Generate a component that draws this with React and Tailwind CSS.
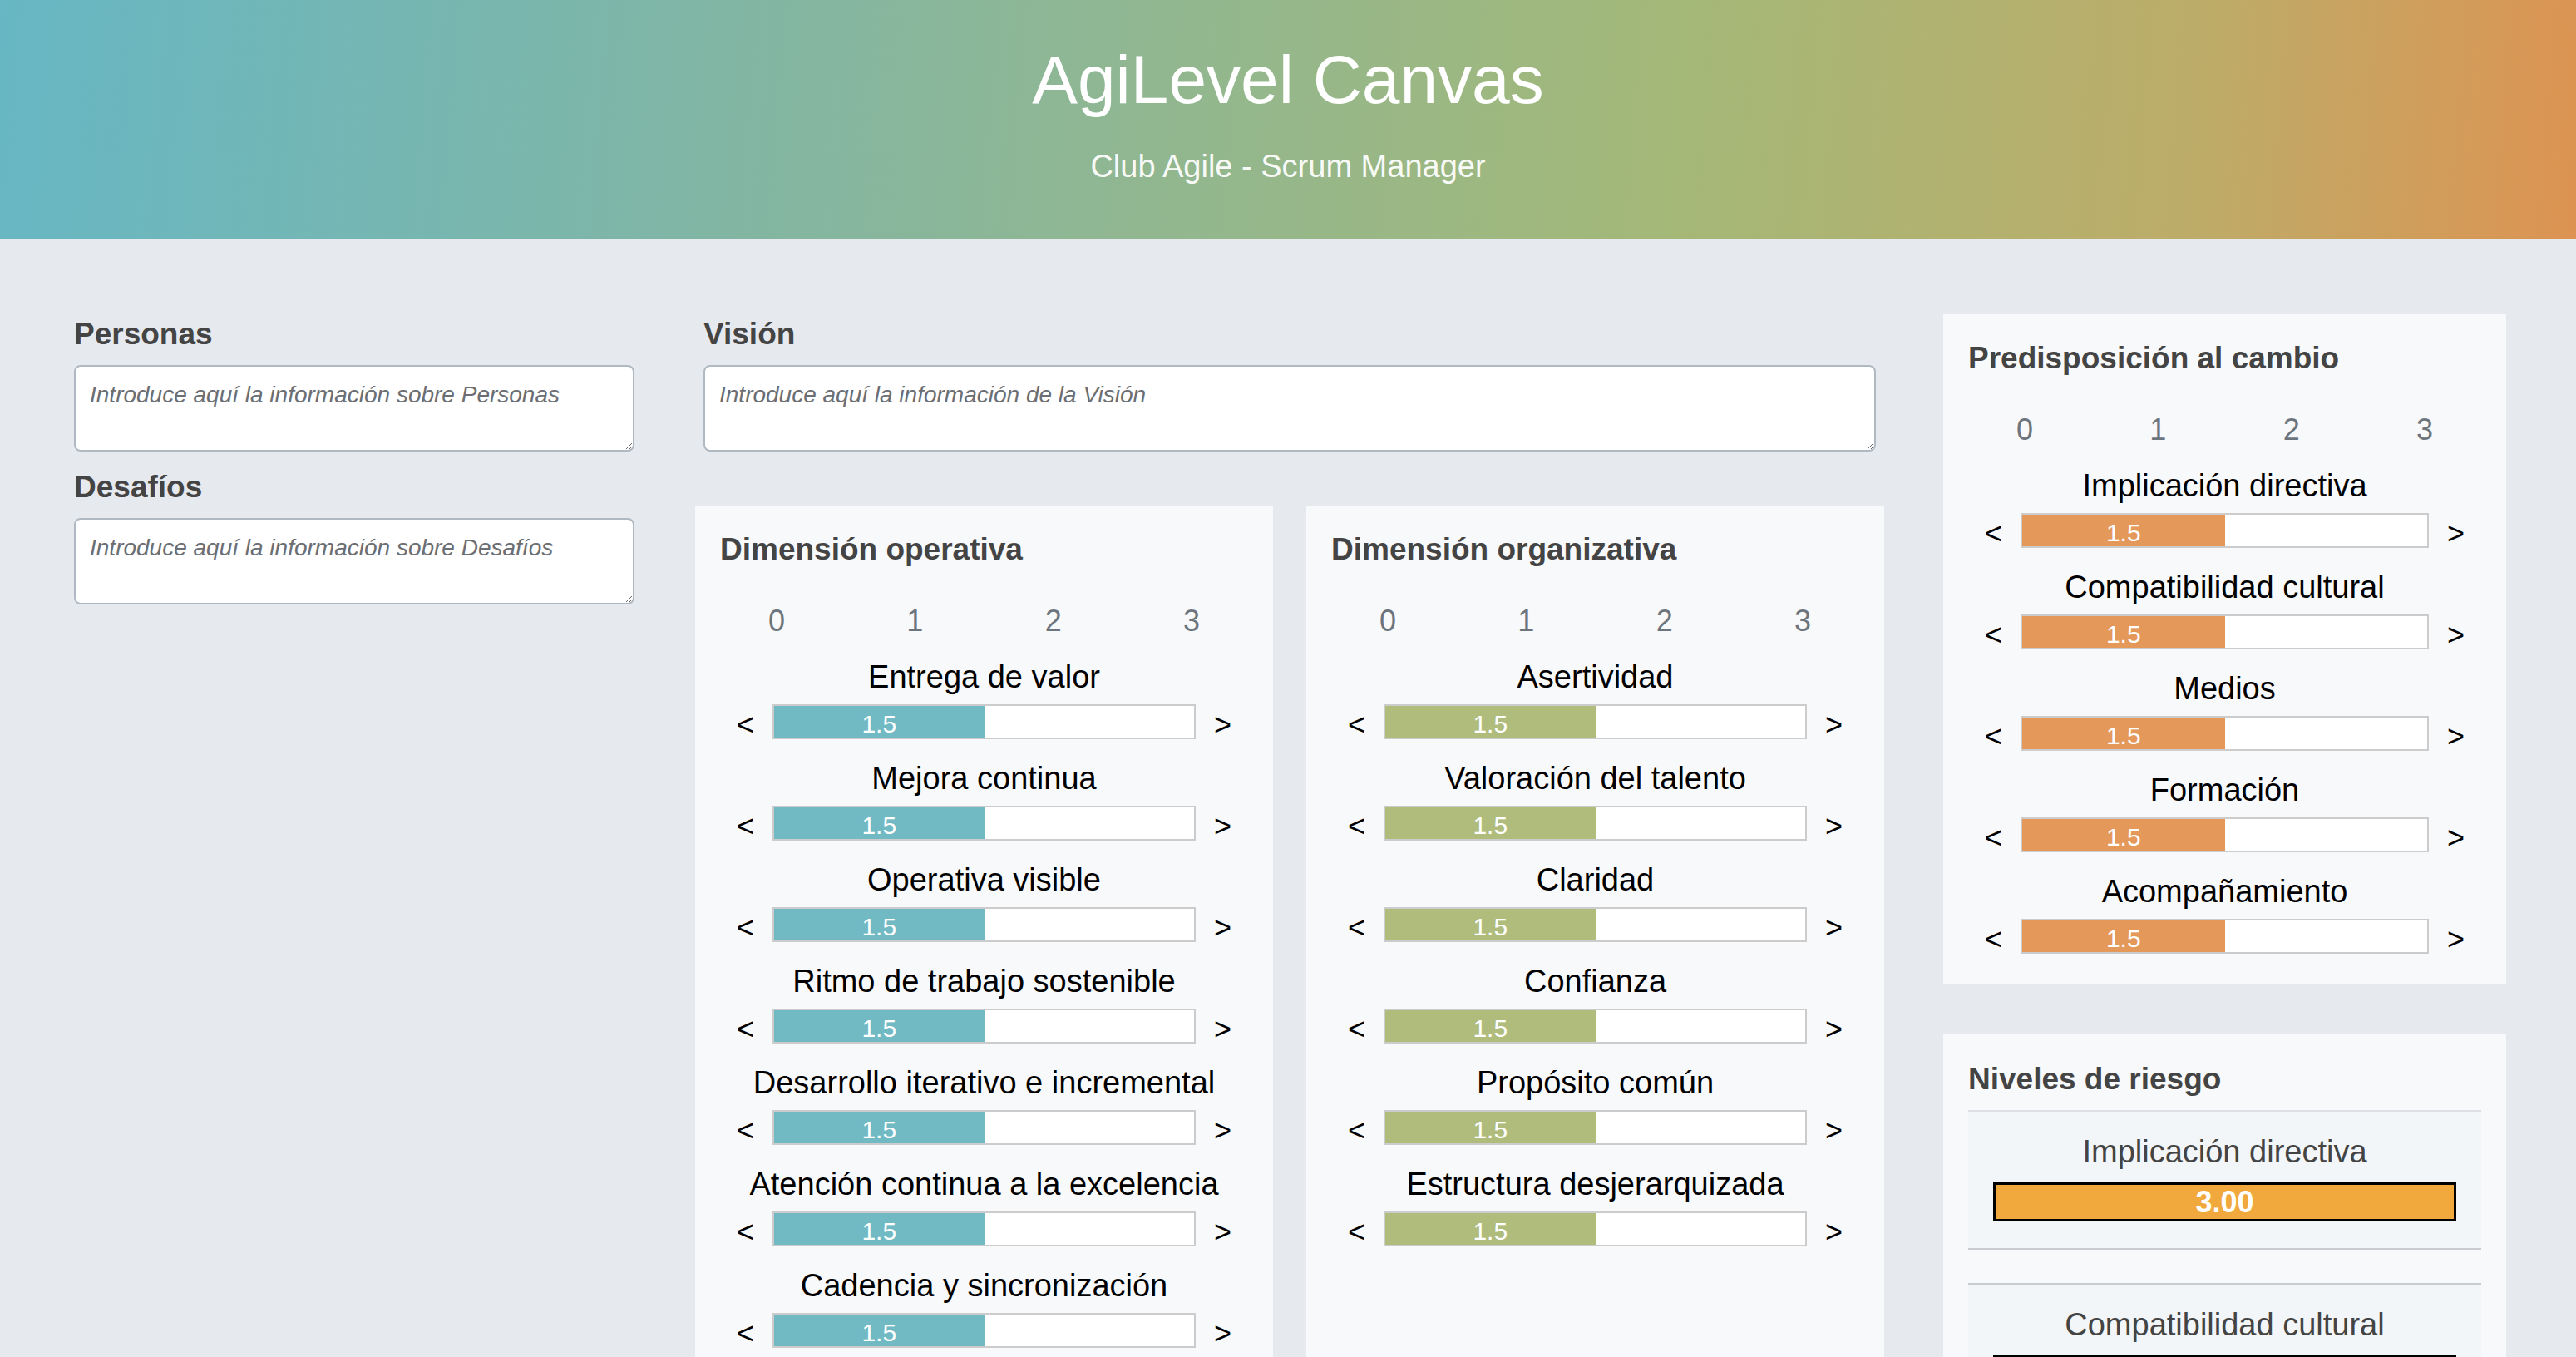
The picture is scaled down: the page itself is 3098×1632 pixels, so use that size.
import React from "react";

const FONT = "font-['Liberation_Sans',Helvetica,Arial,sans-serif]";

const operativa = [
  "Entrega de valor",
  "Mejora continua",
  "Operativa visible",
  "Ritmo de trabajo sostenible",
  "Desarrollo iterativo e incremental",
  "Atención continua a la excelencia",
  "Cadencia y sincronización",
];

const organizativa = [
  "Asertividad",
  "Valoración del talento",
  "Claridad",
  "Confianza",
  "Propósito común",
  "Estructura desjerarquizada",
];

const predisposicion = [
  "Implicación directiva",
  "Compatibilidad cultural",
  "Medios",
  "Formación",
  "Acompañamiento",
];

function Heading({ children }) {
  return (
    <h2 className="text-[37px] leading-[44px] font-bold text-[#444444]">{children}</h2>
  );
}

function Area({ placeholder }) {
  return (
    <textarea
      placeholder={placeholder}
      className="mt-[15px] block w-full h-[104px] border-2 border-[#b0b9c2] rounded-[8px] bg-white px-[17px] pt-[14px] text-[28px] leading-[1.45] text-[#333] outline-none placeholder:italic placeholder:text-[#6b6e72]"
    />
  );
}

function Scale() {
  return (
    <div className="mt-[40px] flex px-[20px] gap-[22px] text-[36px] leading-[48px] text-[#6c757d]">
      <div className="w-[21px] shrink-0" />
      <div className="flex-1 flex justify-between mx-[-5px]">
        <span>0</span>
        <span>1</span>
        <span>2</span>
        <span>3</span>
      </div>
      <div className="w-[21px] shrink-0" />
    </div>
  );
}

function Row({ label, fill }) {
  return (
    <div className="mb-[23px]">
      <div className="text-center text-[38px] leading-[48px] text-black whitespace-nowrap">{label}</div>
      <div className="mt-[9px] flex items-center px-[20px] gap-[22px] h-[42px]">
        <span className="w-[21px] shrink-0 text-center text-[36px] leading-none pt-[8px] text-black">&lt;</span>
        <div className="flex-1 h-[42px] border-2 border-[#cccccc] bg-white">
          <div className={`w-1/2 h-full ${fill} text-center text-white text-[30px] leading-[32px] pt-[6px]`}>1.5</div>
        </div>
        <span className="w-[21px] shrink-0 text-center text-[36px] leading-none pt-[8px] text-black">&gt;</span>
      </div>
    </div>
  );
}

function Panel({ title, items, fill, className = "" }) {
  return (
    <div className={`bg-[#f8f9fb] pt-[31px] px-[30px] pb-[14px] ${className}`}>
      <Heading>{title}</Heading>
      <Scale />
      <div className="mt-[19px]">
        {items.map((l) => (
          <Row key={l} label={l} fill={fill} />
        ))}
      </div>
    </div>
  );
}

function Risk({ label, value, first }) {
  return (
    <div
      className={`${first ? "mt-[15px] border-t-[#dde0e4]" : "mt-[40px] border-t-[#c8ccd0]"} border-t-2 border-b-2 border-b-[#c8ccd0] bg-[#f3f6f9] px-[30px] pt-[24px] pb-[32px]`}
    >
      <div className="text-center text-[38px] leading-[48px] text-[#444444] whitespace-nowrap">{label}</div>
      <div className="mt-[13px] h-[47px] border-[3px] border-black bg-[#f1a93d] text-center text-white font-bold text-[36px] leading-[41px]">
        {value}
      </div>
    </div>
  );
}

export default function App() {
  return (
    <div className={`min-h-screen bg-[#e6e9ee] ${FONT}`}>
      <header className="h-[288px] pt-[47px] text-center text-white bg-[linear-gradient(95deg,#67b7c4_0%,#83b6a2_30%,#a4b878_65%,#bdac69_85%,#dd9352_100%)]">
        <h1 className="text-[82px] leading-[98px] font-normal">AgiLevel Canvas</h1>
        <p className="mt-[27px] text-[38px] leading-[56px] text-white/95">Club Agile - Scrum Manager</p>
      </header>

      <main className="flex items-start pt-[90px] pl-[89px] pr-[84px]">
        <section className="w-[674px] shrink-0 pt-[2px]">
          <Heading>Personas</Heading>
          <Area placeholder="Introduce aquí la información sobre Personas" />
          <div className="mt-[21px]">
            <Heading>Desafíos</Heading>
          </div>
          <Area placeholder="Introduce aquí la información sobre Desafíos" />
        </section>

        <section className="ml-[73px] w-[1430px] shrink-0 pt-[2px]">
          <div className="px-[10px]">
            <Heading>Visión</Heading>
            <Area placeholder="Introduce aquí la información de la Visión" />
          </div>
          <div className="mt-[65px] grid grid-cols-2 gap-[40px]">
            <Panel title="Dimensión operativa" items={operativa} fill="bg-[#71b9c3]" />
            <Panel title="Dimensión organizativa" items={organizativa} fill="bg-[#b0bc7c]" />
          </div>
        </section>

        <section className="ml-[71px] w-[677px] shrink-0">
          <Panel title="Predisposición al cambio" items={predisposicion} fill="bg-[#e4995a]" />
          <div className="mt-[60px] bg-[#f8f9fb] pt-[32px] px-[30px] pb-[40px]">
            <Heading>Niveles de riesgo</Heading>
            {predisposicion.map((l, i) => (
              <Risk key={l} label={l} value="3.00" first={i === 0} />
            ))}
          </div>
        </section>
      </main>
    </div>
  );
}
